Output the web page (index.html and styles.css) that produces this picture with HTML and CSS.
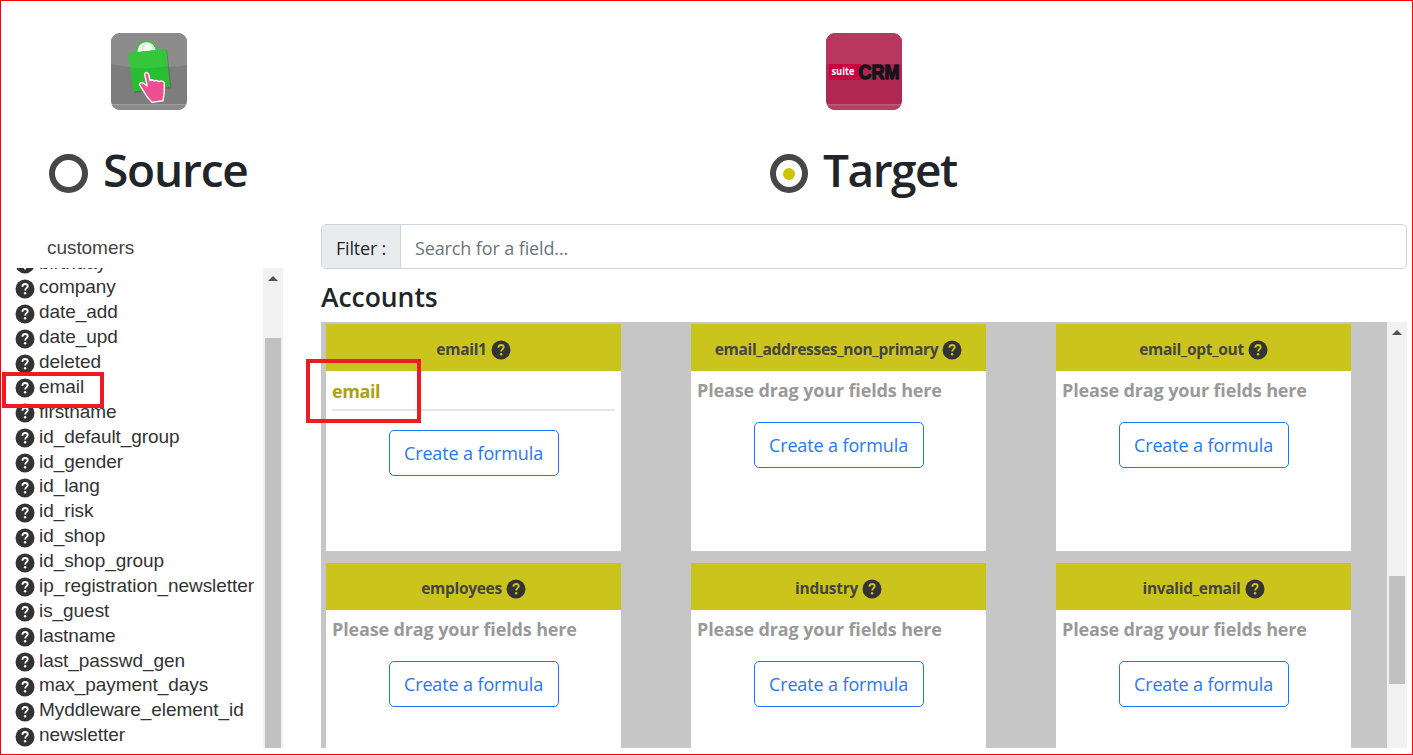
FILE: index.html
```html
<!DOCTYPE html>
<html lang="en">
<head>
<meta charset="utf-8">
<title>Field mapping</title>
<link rel="stylesheet" href="styles.css">
</head>
<body>
<svg class="defs" aria-hidden="true">
  <symbol id="help" viewBox="0 0 20 20">
    <circle cx="10" cy="10" r="9.5" fill="#333"/>
    <path d="M7.4 7.8C7.5 5.8 8.6 5 10.1 5c1.6 0 2.6.9 2.6 2.2 0 1.9-2.5 2-2.5 4.2" fill="none" stroke="currentColor" stroke-width="1.9"/>
    <circle cx="10.1" cy="14.3" r="1.25" fill="currentColor"/>
  </symbol>
</svg>
<div class="page">
  <header class="systems">
    <section class="system">
      <svg class="logo" viewBox="0 0 76 77">
        <defs><clipPath id="tile"><rect width="76" height="77" rx="9"/></clipPath></defs>
        <g clip-path="url(#tile)">
          <rect width="76" height="77" fill="#7d7d7d"/>
          <path d="M0 0h76v32Q38 39 0 31Z" fill="#8c8c8c"/>
          <path d="M0 71.5h76" stroke="#a0a0a0"/>
          <rect y="72" width="76" height="5" fill="#8b8b8b"/>
        </g>
        <path d="M25.500 20C26 12 30 8.500 35.500 8.500S44.500 12 45.500 18Z" fill="#f4fff3" stroke="#35c43d" stroke-width="1.5"/>
        <path d="M31 18q0-6 4-8m7 7q0-6-4-7" fill="none" stroke="#bdeebb"/>
        <path d="M19 22l37-5 4.500 38-37 5Z" fill="#555" opacity=".5"/>
        <path d="M17.300 20.300L55 16l4 37.700-36.700 5Z" fill="#29bd32"/>
        <path d="M17.300 20.300L55 16l2 17Q38 37 19 34.500Z" fill="#35c63c"/>
        <path d="M33.600 41q1.500-3 4 0l1.400 6.500q2.500-1.500 4.200.5 2.500-1.300 4.300.6 4-1.500 5.800 1v9l-1.300 9.200-11 1.400-5-5.500-7.500-12q.5-3 3.500-1.700l4.200 3Z" fill="#eb4f91" stroke="#ffe9f2" stroke-width="1.500" stroke-linejoin="round"/>
      </svg>
      <h1 class="title"><span class="radio"></span><span class="t-source">Source</span></h1>
    </section>
    <section class="system">
      <svg class="logo logo-target" viewBox="0 0 76 77">
        <g clip-path="url(#tile)">
          <rect width="76" height="77" fill="#b02752"/>
          <path d="M0 0h76v31H0Z" fill="#b93660"/>
          <rect x="3" y="31" width="32" height="14.500" fill="#cb003f"/>
          <path d="M3 46.500h32" stroke="#8c2245"/>
          <path d="M0 72h76" stroke="#d68ba4"/>
          <rect y="72.500" width="76" height="5" fill="#b93d65"/>
          <text class="suite" x="5.500" y="42" textLength="23" lengthAdjust="spacingAndGlyphs">suite</text>
          <text class="crm" x="32.500" y="46" textLength="41" lengthAdjust="spacingAndGlyphs">CRM</text>
        </g>
      </svg>
      <h1 class="title"><span class="radio on"></span><span class="t-target">Target</span></h1>
    </section>
  </header>
  <main class="mapping">
    <aside class="source">
      <div class="module">customers</div>
      <div class="listbox">
        <ul class="fields">
          <li><svg class="help"><use href="#help"/></svg>birthday</li>
          <li><svg class="help"><use href="#help"/></svg>company</li>
          <li><svg class="help"><use href="#help"/></svg>date_add</li>
          <li><svg class="help"><use href="#help"/></svg>date_upd</li>
          <li><svg class="help"><use href="#help"/></svg>deleted</li>
          <li class="marked"><svg class="help"><use href="#help"/></svg>email<span class="mark mark-source"></span></li>
          <li><svg class="help"><use href="#help"/></svg>firstname</li>
          <li><svg class="help"><use href="#help"/></svg>id_default_group</li>
          <li><svg class="help"><use href="#help"/></svg>id_gender</li>
          <li><svg class="help"><use href="#help"/></svg>id_lang</li>
          <li><svg class="help"><use href="#help"/></svg>id_risk</li>
          <li><svg class="help"><use href="#help"/></svg>id_shop</li>
          <li><svg class="help"><use href="#help"/></svg>id_shop_group</li>
          <li><svg class="help"><use href="#help"/></svg>ip_registration_newsletter</li>
          <li><svg class="help"><use href="#help"/></svg>is_guest</li>
          <li><svg class="help"><use href="#help"/></svg>lastname</li>
          <li><svg class="help"><use href="#help"/></svg>last_passwd_gen</li>
          <li><svg class="help"><use href="#help"/></svg>max_payment_days</li>
          <li><svg class="help"><use href="#help"/></svg>Myddleware_element_id</li>
          <li><svg class="help"><use href="#help"/></svg>newsletter</li>
        </ul>
        <div class="scroll"><i class="arrow"></i><i class="thumb thumb-source"></i></div>
      </div>
    </aside>
    <section class="target">
      <div class="filter"><label class="filter-label"><span>Filter :</span></label><div class="filter-input"><span>Search for a field...</span></div></div>
      <h2 class="accounts"><span>Accounts</span></h2>
      <div class="panel">
        <div class="cards">
          <article class="card">
            <h3><span>email1</span><svg class="help"><use href="#help"/></svg></h3>
            <div class="drop filled"><span>email</span></div>
            <button class="formula">Create a formula</button>
            <span class="mark mark-target"></span>
          </article>
          <article class="card">
            <h3><span>email_addresses_non_primary</span><svg class="help"><use href="#help"/></svg></h3>
            <div class="drop">Please drag your fields here</div>
            <button class="formula">Create a formula</button>
          </article>
          <article class="card">
            <h3><span>email_opt_out</span><svg class="help"><use href="#help"/></svg></h3>
            <div class="drop">Please drag your fields here</div>
            <button class="formula">Create a formula</button>
          </article>
          <article class="card">
            <h3><span>employees</span><svg class="help"><use href="#help"/></svg></h3>
            <div class="drop">Please drag your fields here</div>
            <button class="formula">Create a formula</button>
          </article>
          <article class="card">
            <h3><span>industry</span><svg class="help"><use href="#help"/></svg></h3>
            <div class="drop">Please drag your fields here</div>
            <button class="formula">Create a formula</button>
          </article>
          <article class="card">
            <h3><span>invalid_email</span><svg class="help"><use href="#help"/></svg></h3>
            <div class="drop">Please drag your fields here</div>
            <button class="formula">Create a formula</button>
          </article>
        </div>
        <div class="scroll"><i class="arrow"></i><i class="thumb thumb-target"></i></div>
      </div>
    </section>
  </main>
</div>
</body>
</html>
```
FILE: styles.css
```css
* { box-sizing: border-box; }
body { margin: 0; background: #fff; color: #212529; font-family: "Open Sans", "Noto Sans", sans-serif; }
.defs { display: none; }
.page { width: 1413px; height: 755px; border: 1px solid #f00; overflow: hidden; }

.systems { display: grid; grid-template-columns: 721px 1fr; height: 223px; padding: 32px 0 0 48px; }
.logo { display: block; width: 76px; height: 77px; margin: 0 0 0 62px; }
.logo-target { margin-left: 56px; }
.suite { font: bold 10.5px "Open Sans", sans-serif; fill: #fff; }
.crm { font: bold 20px "Liberation Sans", sans-serif; fill: #17131a; stroke: #17131a; stroke-width: 1.4; stroke-linejoin: round; }
.title { display: flex; align-items: center; gap: 15px; height: 64px; margin: 29px 0 0; font-size: 46px; font-weight: 600; line-height: 64px; }
.title > span:last-child { position: relative; top: -2px; }
.radio { display: grid; place-items: center; width: 39px; height: 39px; border: 6px solid #474747; border-radius: 50%; margin-top: 5px; }
.radio.on { width: 38px; }
.radio.on::after { content: ""; width: 12px; height: 12px; border-radius: 50%; background: #cbc400; }
.t-source { letter-spacing: -1.2px; }
.t-target { letter-spacing: -1.5px; }

.mapping { display: grid; grid-template-columns: 282px 1086px; column-gap: 38px; height: 524px; }
.source { font-family: "Liberation Sans", Arial, sans-serif; font-size: 19px; letter-spacing: -.06px; color: #444; }
.module { height: 44px; padding-left: 46px; line-height: 47px; }
.listbox { display: grid; grid-template-columns: 262px 20px; height: 480px; overflow: hidden; }
.fields { list-style: none; margin: -17.4px 0 0; padding: 0 0 0 14px; min-width: 0; white-space: nowrap; color: #333; }
.fields li { display: flex; align-items: center; gap: 4px; height: 24.89px; line-height: 24.89px; }
.help { flex: none; width: 20px; height: 20px; color: #fff; }
.fields .help { margin-top: 2px; }
.marked { position: relative; }
.mark { position: absolute; border: 4px solid #ed1c24; }
.mark-source { left: -13px; top: -3px; width: 102px; height: 36px; }

.scroll { position: relative; background: #f1f1f1; }
.arrow { position: absolute; left: 5px; top: 8px; border: 5px solid transparent; border-top: 0; border-bottom-color: #505050; }
.thumb { position: absolute; left: 2px; width: 16px; background: #c1c1c1; }
.thumb-source { top: 70px; bottom: 0; }
.thumb-target { top: 254px; height: 108px; }

.filter { display: flex; height: 45px; border: 1px solid #ced4da; border-radius: 5px; overflow: hidden; font-size: 18px; line-height: 46px; }
.filter-label { width: 79px; padding-left: 14px; background: #e9ecef; border-right: 1px solid #ced4da; white-space: nowrap; letter-spacing: -.2px; }
.filter-input { padding-left: 14px; color: #6c757d; letter-spacing: -.12px; }
.accounts { height: 53px; margin: 0; font-size: 26.5px; line-height: 56px; font-weight: 600; letter-spacing: -.05px; }
.panel { display: grid; grid-template-columns: 1066px 20px; height: 426px; }
.cards { display: grid; grid-template-columns: repeat(3, 295px); grid-template-rows: 227px 227px; gap: 12px 70px; align-content: start; padding: 2px 0 0 5px; height: 426px; background: #c6c6c6; clip-path: inset(0 0 0 -20px); }
.card { position: relative; display: flex; flex-direction: column; align-items: center; background: #fff; }
.card h3 { display: flex; align-items: center; justify-content: center; gap: 4px; width: 100%; height: 47px; margin: 0; padding-top: 5px; background: #cbc41c; color: #444; font-size: 15.5px; line-height: 20px; font-weight: 700; letter-spacing: -.3px; }
.card h3 span { margin-top: -3px; }
.card h3 .help { color: #cbc41c; }
.drop { width: 283px; height: 51px; font-size: 18px; line-height: 38px; font-weight: 700; letter-spacing: -.14px; color: #999; white-space: nowrap; }
.drop.filled { height: 40px; margin-bottom: 19px; line-height: 41px; letter-spacing: -.4px; color: #aba112; border-bottom: 2px solid #e5e5e5; }
.formula { width: 170px; height: 46px; padding: 0; border: 1px solid #1877ff; border-radius: 5px; background: #fff; color: #2878f5; font: 18px/45px "Open Sans", "Noto Sans", sans-serif; letter-spacing: -.13px; }
.mark-target { left: -20px; top: 35px; width: 115px; height: 64px; }
```
